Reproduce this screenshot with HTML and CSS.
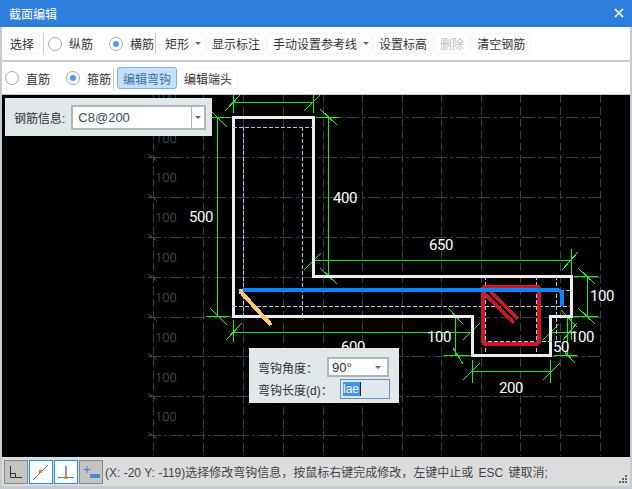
FILE: index.html
```html
<!DOCTYPE html>
<html lang="zh-CN">
<head>
  <meta charset="UTF-8" />
  <title>截面编辑</title>
  <link rel="stylesheet" href="styles.css">
</head>
<body>
  <div class="window">
    <header class="title-bar">
      <span class="title-text">截面编辑</span>
      <svg class="close-icon" width="10" height="10" viewBox="0 0 10 10"><path d="M1 1L9 9M9 1L1 9"/></svg>
    </header>

    <div class="toolbar toolbar-top">
      <button class="tool-btn">选择</button>
      <span class="tool-sep sep-a"></span>
      <label class="radio"><span class="radio-dot"></span>纵筋</label>
      <label class="radio radio-gap"><span class="radio-dot checked"></span>横筋</label>
      <span class="tool-sep sep-b"></span>
      <button class="tool-btn has-arrow">矩形<i class="arrow"></i></button>
      <button class="tool-btn">显示标注</button>
      <button class="tool-btn has-arrow tight">手动设置参考线<i class="arrow"></i></button>
      <button class="tool-btn">设置标高</button>
      <button class="tool-btn disabled">删除</button>
      <button class="tool-btn">清空钢筋</button>
    </div>

    <div class="toolbar toolbar-second">
      <label class="radio"><span class="radio-dot"></span>直筋</label>
      <label class="radio radio-gap2"><span class="radio-dot checked"></span>箍筋</label>
      <span class="tool-sep sep-c"></span>
      <button class="tool-btn active">编辑弯钩</button>
      <button class="tool-btn">编辑端头</button>
    </div>

    <main class="canvas">
      <svg class="drawing" width="628" height="362" viewBox="2 95 628 362">
        <!-- grid -->
        <path class="grid-h" d="M148 117H600M148 157H600M148 197H600M148 237H600M148 277H600M148 317H600M148 356.5H600M148 396H600M148 435.5H600"/>
        <path class="grid-v" d="M153 95V456M203 95V456M243 95V456M283 95V456M323 95V456M362 95V456M402 95V456M441 95V456M481 95V456M520 95V456M560 95V456M600 95V456"/>
        <path class="grid-tick" d="M148 154L157 161M148 194L157 201M148 234L157 241M148 274L157 281M148 314L157 321M148 353L157 360M148 393L157 400M148 432L157 439"/>
        <g class="grid-label">
          <text x="155" y="102">100</text>
          <text x="155" y="143">100</text>
          <text x="155" y="182">100</text>
          <text x="155" y="222">100</text>
          <text x="155" y="262">100</text>
          <text x="155" y="302">100</text>
          <text x="155" y="342">100</text>
          <text x="155" y="382">100</text>
          <text x="155" y="421">100</text>
        </g>

        <!-- dimension lines -->
        <path class="dim" d="M233 102H313M233 95V113M313 95V113M225 111L240 95M304 111L320 95
          M217 117V316M212 117H230M206 316H230M212 112L227 127M210 308L227 325
          M328 117V276M316 117H340M313 276H340M320 109L337 125M320 268L337 284
          M313 260H571M313 249V272M571 249V276M304 270L321 253M562 270L578 252
          M233 332H472M233 320V342M226 340L242 323M463 340L480 323M472 320V340
          M455 316V355M444 316H472M444 355H472M448 308L463 324M453 348L463 364
          M472 371H550M472 360V383M550 360V383M463 380L480 363M543 380L560 363
          M587 276V316M574 276H598M560 316H598M578 268L595 284M578 308L595 324
          M550 332H577M567 316V356M554 355H577M571 316V340M543 340L559 324M563 340L577 323M561 310L577 327M561 348L575 363"/>

        <!-- section outline -->
        <path class="outline" d="M233.5 117.5H313V276.5H571V316H550V355H472V316H233.5Z"/>
        <path class="inner" d="M233 127H313M243 127V316M302 127V316M233 306H571M485 276V355M536 276V355M482 341H552M556 276V341M560 290H571"/>

        <!-- rebar -->
        <path class="stirrup" d="M485 287H537Q539 287 539 289V340Q539 344 535 344H486Q483 344 483 340V289Q483 287 485 287Z"/>
        <path class="stirrup-hook" d="M484 293L514 323M491 292L518 319"/>
        <path class="bar-blue" d="M243 290H558L562 292V306"/>
        <path class="bar-hook" d="M241 292L271 325"/>
        <rect class="bar-end" x="239" y="289" width="4" height="5"/>

        <g class="dim-label">
          <text x="333" y="203">400</text>
          <text x="189" y="222">500</text>
          <text x="429" y="250">650</text>
          <text x="590" y="301">100</text>
          <text x="427" y="342">100</text>
          <text x="570" y="342">100</text>
          <text x="553" y="352">50</text>
          <text x="499" y="393">200</text>
          <text x="341" y="352">600</text>
        </g>
      </svg>

      <div class="panel panel-rebar">
        <span class="panel-label">钢筋信息:</span>
        <div class="combo combo-wide">
          <span class="combo-value">C8@200</span>
          <span class="combo-btn"><i class="arrow"></i></span>
        </div>
      </div>

      <div class="panel panel-hook">
        <div class="hook-row">
          <span class="hook-label">弯钩角度：</span>
          <div class="combo combo-small">
            <span class="combo-value">90°</span>
            <i class="arrow"></i>
          </div>
        </div>
        <div class="hook-row">
          <span class="hook-label">弯钩长度(d)：</span>
          <div class="hook-input"><span class="selected">lae</span></div>
        </div>
      </div>
    </main>

    <footer class="status-bar">
      <span class="snap-btn">
        <svg width="22" height="22" viewBox="0 0 22 22"><path class="ico-dark" d="M5.5 5V16.5H17M5.5 12.5H10.5V16.5"/></svg>
      </span>
      <span class="snap-btn on">
        <svg width="22" height="22" viewBox="0 0 22 22"><path class="ico-blue" d="M3 19L18 4"/><rect class="ico-orange" x="9" y="9" width="3" height="3"/></svg>
      </span>
      <span class="snap-btn on">
        <svg width="22" height="22" viewBox="0 0 22 22"><path class="ico-dark" d="M11 5V16"/><path class="ico-blue" d="M3 16.5H19"/><rect class="ico-orange" x="9.5" y="15" width="3" height="3"/></svg>
      </span>
      <span class="snap-btn">
        <svg width="22" height="22" viewBox="0 0 22 22"><path class="ico-blue" d="M7 5V12M3.5 8.5H10.5"/><rect class="ico-fill" x="10" y="13" width="10" height="4"/></svg>
      </span>
      <span class="status-text">(X: -20 Y: -119)选择修改弯钩信息，按鼠标右键完成修改，左键中止或<span class="wide-spaces"> ESC 键</span>取消;</span>
      <svg class="grip" width="8" height="8" viewBox="0 0 8 8"><path d="M6 0h2v2h-2zM3 3h2v2h-2zM6 3h2v2h-2zM0 6h2v2h-2zM3 6h2v2h-2zM6 6h2v2h-2z"/></svg>
    </footer>
  </div>
</body>
</html>
```

FILE: styles.css
```css
* {
  margin: 0;
  padding: 0;
  box-sizing: border-box;
  font-family: "Liberation Sans", "Noto Sans CJK SC", sans-serif;
}

body {
  width: 632px;
  height: 489px;
  overflow: hidden;
  background: #c6cad2;
}

.window {
  display: flex;
  flex-direction: column;
  height: 489px;
}

.title-bar {
  display: flex;
  justify-content: space-between;
  align-items: center;
  height: 27px;
  padding: 0 8px 1px 9px;
  background: #2e7fdd;
  color: #fff;
  font-size: 12px;
}

.close-icon path {
  stroke: #fff;
  stroke-width: 1.6;
  fill: none;
}

.toolbar {
  display: flex;
  align-items: center;
  margin-left: 2px;
  margin-right: 2px;
  background: #fff;
  font-size: 12px;
  color: #333;
}

.toolbar-top {
  height: 33px;
  margin-bottom: 2px;
  padding-left: 2px;
}

.toolbar-second {
  height: 32px;
  padding-left: 3px;
  margin-bottom: 1px;
}

.tool-btn {
  display: flex;
  align-items: center;
  height: 21px;
  padding: 0 5px;
  margin-right: 1px;
  border: 1px solid #f6f6f6;
  border-radius: 3px;
  background: #fff;
  font-size: 12px;
  color: #333;
}

.tool-btn.disabled {
  color: #bbb;
}

.tool-btn.active {
  height: 22px;
  margin-right: 1px;
  background: #c4dffb;
  border-color: #7ab0ee;
  color: #3a6fa8;
}

.tool-btn.has-arrow {
  padding-right: 3px;
}

.tool-btn.has-arrow.tight {
  padding-right: 2px;
}

.has-arrow .arrow {
  margin-left: 6px;
}

.arrow {
  display: inline-block;
  border-left: 3px solid transparent;
  border-right: 3px solid transparent;
  border-top: 3px solid #666;
}

.tool-sep {
  width: 1px;
  height: 21px;
  background: #c8ccd2;
}

.sep-a { margin: 0 4px 0 2px; }
.sep-b { margin: 0 3px 0 1px; }
.sep-c { margin: 0 3px 0 2px; }

.radio {
  display: flex;
  align-items: center;
  gap: 7px;
}

.radio-gap { margin-left: 16px; }
.radio-gap2 { margin-left: 16px; }

.radio-dot {
  position: relative;
  width: 14px;
  height: 14px;
  border: 1px solid #a8a8a8;
  border-radius: 50%;
  background: #fff;
}

.radio-dot.checked::after {
  content: '';
  position: absolute;
  top: 3px;
  left: 3px;
  width: 6px;
  height: 6px;
  border-radius: 50%;
  background: #4a9df0;
}

.canvas {
  position: relative;
  flex: 1;
  margin: 0 2px;
  background: #000;
  overflow: hidden;
}

.drawing {
  display: block;
}

.drawing path {
  fill: none;
  shape-rendering: crispEdges;
}

.grid-h {
  stroke: #3a404c;
  stroke-dasharray: 13 3 3 3;
}

.grid-v {
  stroke: #3a404c;
  stroke-dasharray: 8 4;
}

.grid-tick {
  stroke: #3a404c;
}

.grid-label text {
  font-family: Roboto, "Liberation Sans", sans-serif;
  font-size: 13px;
  font-weight: 300;
  fill: #565b66;
}

.dim {
  stroke: #14f014;
}

.outline {
  stroke: #eeeeee;
  stroke-width: 3;
}

.inner {
  stroke: #a8c8f0;
  stroke-dasharray: 4 2;
}

.stirrup {
  stroke: #cc1a24;
  stroke-width: 4;
}

.stirrup-hook {
  stroke: #cc1a24;
  stroke-width: 4;
}

.bar-blue {
  stroke: #0a84ff;
  stroke-width: 4;
}

.bar-hook {
  stroke: #ffc870;
  stroke-width: 4;
}

.bar-end {
  fill: #ffc870;
}

.dim-label text {
  font-family: Roboto, "Liberation Sans", sans-serif;
  font-size: 15px;
  letter-spacing: -0.4px;
  fill: #fff;
}

.panel {
  position: absolute;
  background: #e0e8ea;
  font-size: 12px;
  color: #333;
}

.panel-rebar {
  top: 3px;
  left: 3px;
  width: 207px;
  height: 38px;
  display: flex;
  align-items: center;
  gap: 6px;
  padding: 0 6px 0 9px;
}

.panel-hook {
  top: 253px;
  left: 247px;
  width: 150px;
  height: 55px;
  display: flex;
  flex-direction: column;
  gap: 2px;
  padding: 9px 9px 0 9px;
}

.hook-row {
  display: flex;
  align-items: center;
  justify-content: space-between;
  height: 20px;
}

.combo {
  display: flex;
  align-items: center;
  background: #fff;
  border: 2px solid #b0b5b8;
}

.combo-wide {
  flex: 1;
  height: 25px;
  padding-left: 5px;
  font-size: 13px;
}

.combo-wide .combo-value {
  flex: 1;
  color: #3a4a5a;
}

.combo-btn {
  display: flex;
  align-items: center;
  justify-content: center;
  width: 13px;
  height: 100%;
  border-left: 1px solid #b0b5b8;
}

.combo-small {
  justify-content: space-between;
  width: 62px;
  height: 20px;
  margin-right: 1px;
  padding: 0 6px 0 3px;
  font-size: 13px;
}

.hook-input {
  display: flex;
  align-items: center;
  width: 50px;
  height: 20px;
  padding-left: 2px;
  border: 1px solid #6a8fd8;
  font-size: 12px;
}

.selected {
  width: 18px;
  height: 14px;
  line-height: 14px;
  background: #3f93f5;
  color: #fff;
  border-right: 1px solid #222;
}

.status-bar {
  display: flex;
  align-items: center;
  gap: 1px;
  height: 29px;
  margin: 0 2px 3px 2px;
  padding-left: 2px;
  background: #dcdcde;
  font-size: 12px;
  color: #444;
}

.snap-btn {
  display: flex;
  width: 24px;
  height: 24px;
  border: 1px solid #888;
  background: #c4c4c4;
}

.snap-btn.on {
  background: #fff;
  border-color: #1e90ff;
}

.snap-btn path {
  fill: none;
}

.ico-dark { stroke: #333; }
.ico-blue { stroke: #3f80cc; }
.ico-orange { fill: #f08a20; }
.ico-fill { fill: #4a88d0; }

.status-text {
  flex: 1;
  margin-left: 1px;
  white-space: nowrap;
}

.wide-spaces {
  word-spacing: 2px;
}

.grip {
  align-self: flex-end;
  margin: 0 3px 3px 0;
  fill: #666;
}
```
